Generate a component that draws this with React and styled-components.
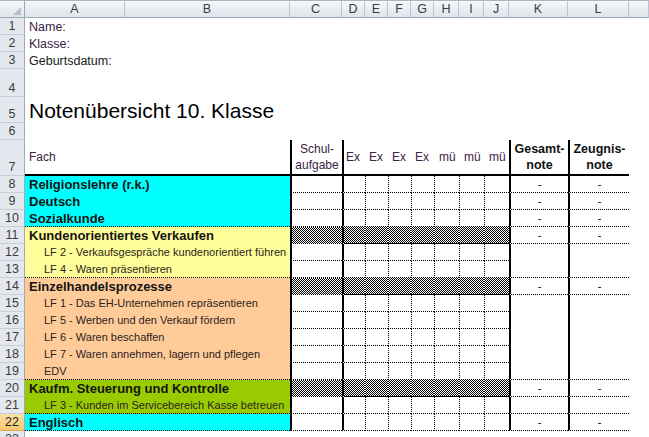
import React from 'react';
import styled, { createGlobalStyle, css } from 'styled-components';

const GlobalStyle = createGlobalStyle`
  html, body { margin: 0; padding: 0; background: #fff; overflow: hidden; }
  body { font-family: "Liberation Sans", Arial, sans-serif; }
`;

const CYAN = '#00ffff';
const YELLOW = '#ffff99';
const PEACH = '#ffcc99';
const GREEN = '#99cc00';
const INK = '#3d2346';

const Sheet = styled.div`
  display: grid;
  grid-template-columns: 25px 100px 165px 52px repeat(4, 23px) repeat(3, 25px) 59px 61px 20px;
  grid-template-rows: 18px repeat(3, 17px) 28px 26px 17px 36px repeat(16, 17px);
  width: 649px;
  height: 437px;
  overflow: hidden;
  background: #fff;
  font-family: "Liberation Sans", Arial, sans-serif;
`;

const headBg = css`
  background: linear-gradient(#f5f7fa, #dfe4eb);
`;

const Corner = styled.div`
  box-sizing: border-box;
  ${headBg};
  border-top: 1px solid #aab3c0;
  border-right: 1px solid #9ea9b8;
  border-bottom: 1px solid #9ea9b8;
  display: flex;
  align-items: flex-end;
  justify-content: flex-end;
  padding: 0 3px 2px 0;
`;

const ColHead = styled.div`
  box-sizing: border-box;
  ${headBg};
  border-top: 1px solid #aab3c0;
  border-right: 1px solid #bcc4cf;
  border-bottom: 1px solid #9ea9b8;
  display: flex;
  align-items: center;
  justify-content: center;
  font-size: 12.5px;
  color: #3c3c3c;
  line-height: 1;
`;

const RowHead = styled.div`
  box-sizing: border-box;
  background: ${p => (p.$active ? 'linear-gradient(#fbe0a6, #f5c870)' : '#e4e8ee')};
  border-right: 1px solid #9ea9b8;
  border-bottom: 1px solid ${p => (p.$active ? '#e3a94a' : '#c7cfd9')};
  display: flex;
  align-items: flex-end;
  justify-content: center;
  padding-bottom: 1px;
  font-size: 12.5px;
  line-height: 14px;
  color: ${p => (p.$active ? '#222' : '#3c3c3c')};
`;

const lineStyle = v =>
  v === 'thick' ? '2px solid #000' : v === 'dot' ? '1px dotted #000' : 'none';

const patternBg = css`
  background: repeating-conic-gradient(#000 0% 25%, #fff 0% 50%) 0 0 / 2px 2px;
`;

const Cell = styled.div`
  box-sizing: border-box;
  min-width: 0;
  display: flex;
  align-items: ${p => p.$valign || 'center'};
  justify-content: ${p => p.$justify || 'flex-start'};
  white-space: nowrap;
  grid-column: ${p => (p.$span ? `span ${p.$span}` : 'auto')};
  background: ${p => p.$bg || 'transparent'};
  ${p => p.$pattern && patternBg};
  border-left: ${p => lineStyle(p.$left)};
  border-bottom: ${p => lineStyle(p.$bottom)};
`;

const FreeText = styled(Cell)`
  grid-column: 2 / -1;
  padding-left: 4px;
  font-size: ${p => (p.$title ? '21px' : '12.5px')};
  color: ${p => p.$color || '#000'};
  align-items: flex-end;
  line-height: ${p => (p.$title ? '24px' : '15px')};
`;

const HeadCell = styled(Cell)`
  font-size: ${p => (p.$bold ? '12.5px' : '12px')};
  font-weight: ${p => (p.$bold ? 700 : 400)};
  color: ${p => (p.$bold ? '#111' : INK)};
  line-height: 16px;
  padding-left: ${p => (p.$pad != null ? p.$pad : 0)}px;
  text-align: center;
  white-space: normal;
`;

const Label = styled(Cell)`
  grid-column: span 2;
  padding-left: ${p => (p.$sub ? 19 : 4)}px;
  font-size: ${p => (p.$sub ? '11px' : '13px')};
  font-weight: ${p => (p.$sub ? 400 : 700)};
  color: ${p => (p.$sub ? '#2b2320' : '#141414')};
  line-height: 15px;
`;

const Mark = styled(Cell)`
  justify-content: center;
  font-size: 11px;
  color: #000;
`;

const Triangle = () => (
  <svg width="8" height="8" viewBox="0 0 8 8">
    <polygon points="8,0 8,8 0,8" fill="#b6bec9" />
  </svg>
);

const COLS = ['A', 'B', 'C', 'D', 'E', 'F', 'G', 'H', 'I', 'J', 'K', 'L', ''];

const subjects = [
  { n: 8, label: 'Religionslehre (r.k.)', bg: CYAN, grade: true, kl: true },
  { n: 9, label: 'Deutsch', bg: CYAN, grade: true, kl: true },
  { n: 10, label: 'Sozialkunde', bg: CYAN, grade: true, kl: true, ab: true },
  { n: 11, label: 'Kundenorientiertes Verkaufen', bg: YELLOW, grade: true, kl: true, pattern: true },
  { n: 12, label: 'LF 2 - Verkaufsgespräche kundenorientiert führen', sub: true, bg: YELLOW },
  { n: 13, label: 'LF 4 - Waren präsentieren', sub: true, bg: YELLOW, kl: true, ab: true },
  { n: 14, label: 'Einzelhandelsprozesse', bg: PEACH, grade: true, kl: true, pattern: true },
  { n: 15, label: 'LF 1 - Das EH-Unternehmen repräsentieren', sub: true, bg: PEACH },
  { n: 16, label: 'LF 5 - Werben und den Verkauf fördern', sub: true, bg: PEACH },
  { n: 17, label: 'LF 6 - Waren beschaffen', sub: true, bg: PEACH },
  { n: 18, label: 'LF 7 - Waren annehmen, lagern und pflegen', sub: true, bg: PEACH },
  { n: 19, label: 'EDV', sub: true, bg: PEACH, kl: true, ab: true },
  { n: 20, label: 'Kaufm. Steuerung und Kontrolle', bg: GREEN, grade: true, kl: true, pattern: true },
  { n: 21, label: 'LF 3 - Kunden im Servicebereich Kasse betreuen', sub: true, bg: GREEN, kl: true, ab: true },
  { n: 22, label: 'Englisch', bg: CYAN, grade: true, kl: true, ab: true, active: true },
];

const EXAMS = ['Ex', 'Ex', 'Ex', 'Ex', 'mü', 'mü', 'mü'];

function SubjectRow({ r }) {
  return (
    <>
      <RowHead $active={r.active}>{r.n}</RowHead>
      <Label $bg={r.bg} $sub={r.sub} $bottom={r.ab ? 'dot' : null}>{r.label}</Label>
      <Cell $left="thick" $bottom="dot" $pattern={r.pattern} />
      {EXAMS.map((_, i) => (
        <Cell
          key={i}
          $left={i === 0 ? 'thick' : r.pattern ? null : 'dot'}
          $bottom="dot"
          $pattern={r.pattern}
        />
      ))}
      <Mark $left="thick" $bottom={r.kl ? 'dot' : null}>{r.grade ? '-' : ''}</Mark>
      <Mark $left="thick" $bottom={r.kl ? 'dot' : null}>{r.grade ? '-' : ''}</Mark>
      <Cell />
    </>
  );
}

export default function App() {
  return (
    <>
      <GlobalStyle />
      <Sheet>
        <Corner><Triangle /></Corner>
        {COLS.map((c, i) => (
          <ColHead key={i}>{c}</ColHead>
        ))}

        <RowHead>1</RowHead>
        <FreeText $color={INK}>Name:</FreeText>
        <RowHead>2</RowHead>
        <FreeText $color={INK}>Klasse:</FreeText>
        <RowHead>3</RowHead>
        <FreeText $color="#1a1a1a">Geburtsdatum:</FreeText>
        <RowHead>4</RowHead>
        <FreeText />
        <RowHead>5</RowHead>
        <FreeText $title>Notenübersicht 10. Klasse</FreeText>
        <RowHead>6</RowHead>
        <FreeText />

        <RowHead>7</RowHead>
        <HeadCell $pad={4} $bottom="thick">Fach</HeadCell>
        <HeadCell $bottom="thick" />
        <HeadCell $left="thick" $bottom="thick" $justify="center">Schul-<br />aufgabe</HeadCell>
        {EXAMS.map((t, i) => (
          <HeadCell key={i} $left={i === 0 ? 'thick' : null} $bottom="thick" $pad={i === 0 ? 2 : i < 4 ? 4 : 5}>
            {t}
          </HeadCell>
        ))}
        <HeadCell $bold $left="thick" $bottom="thick" $justify="center">Gesamt-<br />note</HeadCell>
        <HeadCell $bold $left="thick" $bottom="thick" $justify="center">Zeugnis-<br />note</HeadCell>
        <Cell />

        {subjects.map(r => (
          <SubjectRow key={r.n} r={r} />
        ))}

        <RowHead>23</RowHead>
        <FreeText />
      </Sheet>
    </>
  );
}
